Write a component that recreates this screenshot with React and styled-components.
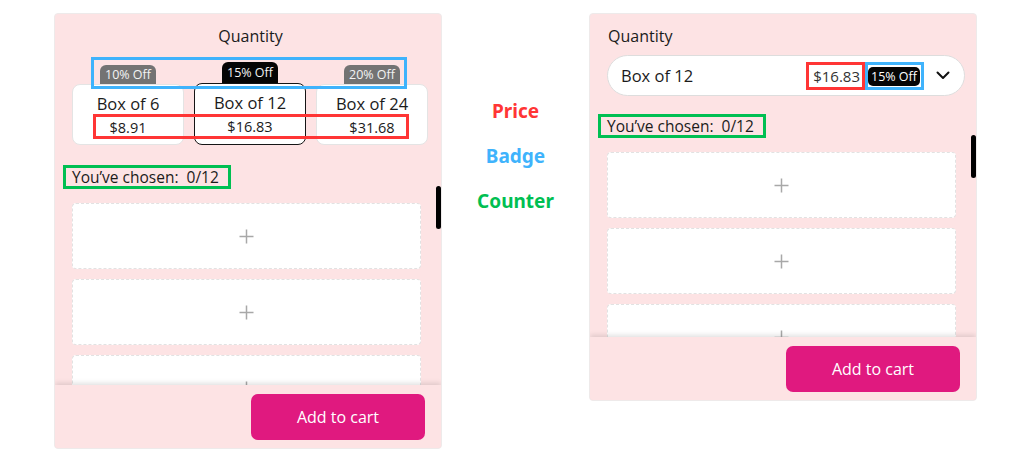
import styled, { createGlobalStyle } from "styled-components";

const GlobalStyle = createGlobalStyle`
  body {
    margin: 0;
    background: #ffffff;
    font-family: "Open Sans", "Liberation Sans", sans-serif;
    color: #1b1b1b;
  }
`;

const options = [
  { name: "Box of 6", price: "$8.91", off: "10% Off" },
  { name: "Box of 12", price: "$16.83", off: "15% Off", selected: true },
  { name: "Box of 24", price: "$31.68", off: "20% Off" },
];

const labels = [
  { text: "Price", color: "#ff3535" },
  { text: "Badge", color: "#3fb3fc" },
  { text: "Counter", color: "#00bf52" },
];

const Plus = () => (
  <svg width="15" height="15" viewBox="0 0 15 15">
    <path d="M7.5 0.5v14M0.5 7.5h14" stroke="#a8a8a8" strokeWidth="1.5" fill="none" />
  </svg>
);

const Chevron = () => (
  <svg width="14" height="9" viewBox="0 0 14 9">
    <path d="M1.5 1.5l5.5 5.5 5.5-5.5" stroke="#111" strokeWidth="2" fill="none" strokeLinecap="round" strokeLinejoin="round" />
  </svg>
);

const Slots = ({ count }) => (
  <SlotList>
    <Thumb />
    {Array.from({ length: count }).map((_, i) => (
      <Slot key={i}>
        <Plus />
      </Slot>
    ))}
  </SlotList>
);

const Footer = () => (
  <FooterBar>
    <CartButton>Add to cart</CartButton>
  </FooterBar>
);

const App = () => {
  return (
    <>
      <GlobalStyle />
      <Page>
        <Panel $height={436}>
          <PanelBody>
            <Title $center>Quantity</Title>
            <OptionRow>
              <Outline $color="#3fb3fc" style={{ left: 19, top: -5, width: 316, height: 32 }} />
              <Outline $color="#ff3535" style={{ left: 21, top: 52, width: 316, height: 25 }} />
              {options.map((o) => (
                <Option key={o.name}>
                  <Badge $selected={o.selected}>{o.off}</Badge>
                  <Card $selected={o.selected}>
                    <CardName>{o.name}</CardName>
                    <CardPrice>{o.price}</CardPrice>
                  </Card>
                </Option>
              ))}
            </OptionRow>
            <Counter $gap={20}>You’ve chosen:  0/12</Counter>
            <Slots count={3} />
          </PanelBody>
          <Footer />
        </Panel>

        <Legend>
          {labels.map((l) => (
            <LegendItem key={l.text} $color={l.color}>
              {l.text}
            </LegendItem>
          ))}
        </Legend>

        <Panel $height={388}>
          <PanelBody>
            <Title>Quantity</Title>
            <Select>
              <SelectName>Box of 12</SelectName>
              <SelectPrice>$16.83</SelectPrice>
              <BadgeFrame>
                <PillBadge>15% Off</PillBadge>
              </BadgeFrame>
              <ChevronWrap>
                <Chevron />
              </ChevronWrap>
            </Select>
            <Counter $gap={18}>You’ve chosen:  0/12</Counter>
            <Slots count={3} />
          </PanelBody>
          <Footer />
        </Panel>
      </Page>
    </>
  );
};

const Page = styled.div`
  display: flex;
  align-items: flex-start;
  padding: 13px 0 0 54px;
`;

const Panel = styled.div`
  width: 388px;
  height: ${(p) => p.$height}px;
  box-sizing: border-box;
  background: #fde3e4;
  border: 1px solid #eeeaea;
  border-radius: 4px;
  display: flex;
  flex-direction: column;
  overflow: hidden;
`;

const PanelBody = styled.div`
  flex: 1;
  position: relative;
  overflow: hidden;
  padding: 11px 20px 0 17px;
`;

const Title = styled.div`
  font-size: 16px;
  line-height: 22px;
  text-align: ${(p) => (p.$center ? "center" : "left")};
  padding-left: ${(p) => (p.$center ? "0" : "1px")};
  width: ${(p) => (p.$center ? "357px" : "auto")};
`;

const OptionRow = styled.div`
  position: relative;
  display: flex;
  align-items: flex-end;
  gap: 10px;
  margin-top: 15px;
`;

const Outline = styled.div`
  position: absolute;
  box-sizing: border-box;
  border: 3px solid ${(p) => p.$color};
  pointer-events: none;
  z-index: 2;
`;

const Option = styled.div`
  width: 112px;
  display: flex;
  flex-direction: column;
  align-items: center;
`;

const Badge = styled.div`
  width: 56px;
  height: ${(p) => (p.$selected ? 21 : 19)}px;
  box-sizing: border-box;
  background: ${(p) => (p.$selected ? "#050505" : "#737373")};
  color: #f4f4f4;
  font-size: 12.5px;
  line-height: ${(p) => (p.$selected ? 21 : 19)}px;
  text-align: center;
  border-radius: 6px 6px 0 0;
`;

const Card = styled.div`
  width: 112px;
  height: ${(p) => (p.$selected ? 62 : 61)}px;
  box-sizing: border-box;
  background: #ffffff;
  border: 1px solid ${(p) => (p.$selected ? "#151515" : "#e4e4e4")};
  border-radius: 8px;
  padding-top: 8px;
  text-align: center;
`;

const CardName = styled.div`
  font-size: 16.5px;
  line-height: 22px;
`;

const CardPrice = styled.div`
  font-size: 14.5px;
  line-height: 20px;
  margin-top: 3px;
`;

const Counter = styled.div`
  display: inline-block;
  margin-top: ${(p) => p.$gap}px;
  margin-left: -9px;
  border: 3px solid #00bf52;
  padding: 0 9px 0 6px;
  font-size: 15.5px;
  line-height: 18px;
  white-space: pre;
`;

const SlotList = styled.div`
  display: flex;
  flex-direction: column;
  gap: 10px;
  margin-top: 14px;
`;

const Thumb = styled.div`
  position: absolute;
  right: 0;
  margin-top: -17px;
  width: 5px;
  height: 43px;
  border-radius: 3px;
  background: #000000;
`;

const Slot = styled.div`
  height: 66px;
  box-sizing: border-box;
  background: #ffffff;
  border: 1px dashed #e2e2e2;
  border-radius: 4px;
  display: flex;
  align-items: center;
  justify-content: center;
  flex-shrink: 0;
`;

const FooterBar = styled.div`
  height: 63px;
  flex-shrink: 0;
  display: flex;
  justify-content: flex-end;
  align-items: flex-start;
  padding: 9px 16px 0 0;
  box-sizing: border-box;
  background: #fde3e4;
  box-shadow: 0 -2px 5px rgba(0, 0, 0, 0.12);
  position: relative;
  z-index: 1;
`;

const CartButton = styled.button`
  width: 174px;
  height: 46px;
  border: none;
  border-radius: 7px;
  background: #e0197f;
  color: #ffffff;
  font-family: "Open Sans", "Liberation Sans", sans-serif;
  font-size: 16px;
  cursor: pointer;
`;

const Legend = styled.div`
  width: 147px;
  display: flex;
  flex-direction: column;
  align-items: center;
  gap: 21px;
  padding-top: 86px;
`;

const LegendItem = styled.div`
  font-family: "Noto Sans", "DejaVu Sans", sans-serif;
  font-weight: 700;
  font-size: 19px;
  line-height: 24px;
  color: ${(p) => p.$color};
`;

const Select = styled.div`
  margin-top: 8px;
  width: 358px;
  height: 41px;
  box-sizing: border-box;
  background: #ffffff;
  border: 1px solid #dddddd;
  border-radius: 21px;
  display: flex;
  align-items: center;
  padding: 0 0 0 13px;
`;

const SelectName = styled.div`
  flex: 1;
  font-size: 16.5px;
`;

const SelectPrice = styled.div`
  box-sizing: border-box;
  height: 28px;
  border: 3px solid #ff3535;
  padding: 0 2px 0 4px;
  font-size: 15px;
  line-height: 22px;
  color: #333333;
`;

const BadgeFrame = styled.div`
  box-sizing: border-box;
  height: 28px;
  border: 3px solid #3fb3fc;
  padding: 2px 1px 0 0;
  display: flex;
`;

const PillBadge = styled.div`
  width: 52px;
  height: 19px;
  background: #050505;
  color: #ffffff;
  font-size: 12.5px;
  line-height: 19px;
  text-align: center;
  border-radius: 5px;
`;

const ChevronWrap = styled.div`
  width: 38px;
  display: flex;
  justify-content: center;
  padding-right: 2px;
`;

export default App;
